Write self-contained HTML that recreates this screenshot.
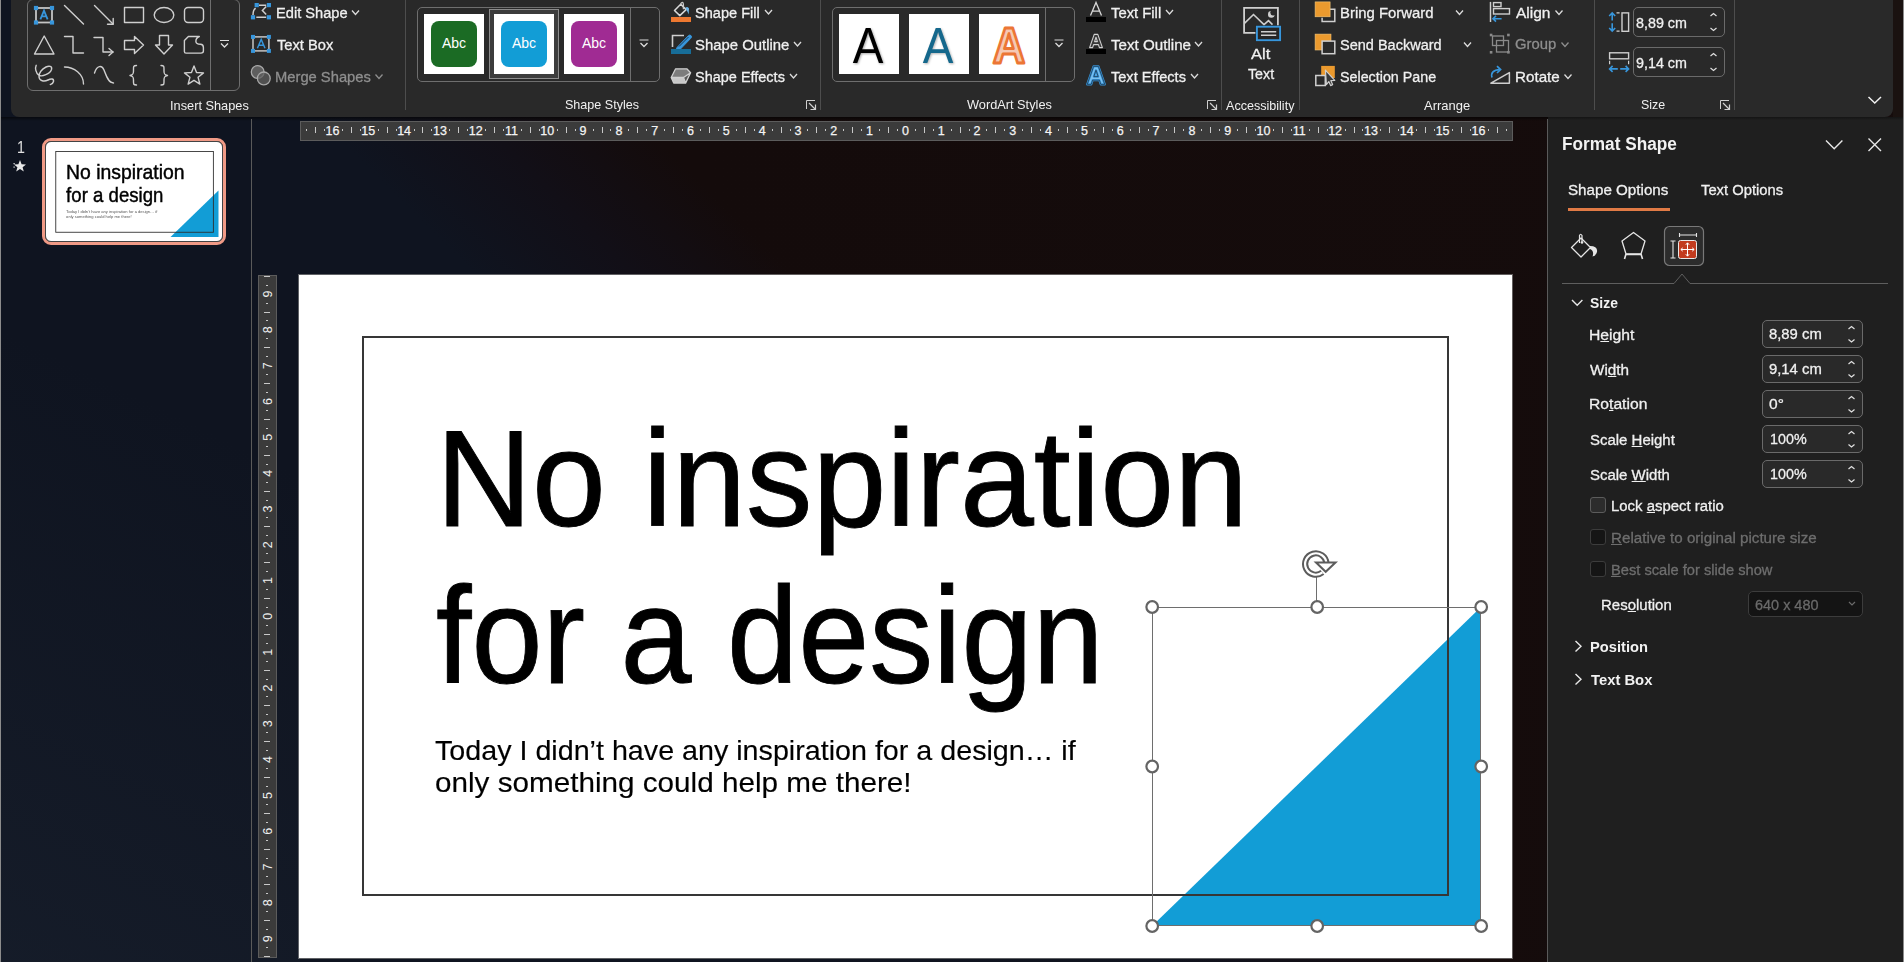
<!DOCTYPE html>
<html><head><meta charset="utf-8"><title>Format Shape</title><style>
*{box-sizing:border-box}
html,body{margin:0;padding:0}
body{width:1904px;height:962px;overflow:hidden;position:relative;background:#0e121c;font-family:"Liberation Sans", sans-serif}
.a{position:absolute}
.t{position:absolute;white-space:pre;font-family:"Liberation Sans", sans-serif}
.ui{-webkit-text-stroke:0.3px currentColor}
svg{position:absolute;overflow:visible}
</style></head>
<body>
<svg style="left:0;top:0" width="1904" height="962" viewBox="0 0 1904 962">
<defs>
<linearGradient id="bgg" gradientUnits="userSpaceOnUse" x1="400" y1="200" x2="560" y2="40">
<stop offset="0" stop-color="#0f1420"/><stop offset="0.5" stop-color="#120f17"/><stop offset="1" stop-color="#140b0b"/>
</linearGradient>
<linearGradient id="bgl" gradientUnits="userSpaceOnUse" x1="250" y1="450" x2="0" y2="962">
<stop offset="0" stop-color="#1a2230" stop-opacity="0"/><stop offset="1" stop-color="#1a2230" stop-opacity="0.55"/>
</linearGradient>
<linearGradient id="bgr" gradientUnits="userSpaceOnUse" x1="700" y1="0" x2="1548" y2="0">
<stop offset="0" stop-color="#1a1010" stop-opacity="0"/><stop offset="1" stop-color="#1a1010" stop-opacity="0.15"/>
</linearGradient>
</defs>
<rect x="0" y="0" width="1904" height="962" fill="url(#bgg)"/>
<rect x="0" y="0" width="1904" height="962" fill="url(#bgr)"/>
<rect x="0" y="0" width="300" height="962" fill="url(#bgl)"/>
</svg>
<div class="a" style="left:1893px;top:0px;width:10px;height:117px;background:#1a1210"></div>
<div class="a" style="left:0px;top:0px;width:1px;height:962px;background:#8c8c8c"></div>
<div class="a" style="left:1903px;top:0px;width:1px;height:962px;background:#8c8c8c"></div>
<div class="a" style="left:1px;top:117px;width:1547px;height:4px;background:linear-gradient(rgba(0,0,0,.55),rgba(0,0,0,0))"></div>
<div class="a" style="left:251px;top:119px;width:1px;height:843px;background:#5a5a5a"></div>
<div class="a" style="left:11px;top:-10px;width:1882px;height:127px;background:#292929;border-radius:8px"></div>
<div class="a" style="left:27px;top:-1px;width:213px;height:92px;border:1px solid #6e6e6e;border-radius:6px"></div>
<div class="a" style="left:210px;top:-1px;width:1px;height:92px;background:#6e6e6e"></div>
<svg style="left:0px;top:0px;" width="1" height="1" viewBox="0 0 1 1"><line x1="220.0" y1="40.5" x2="229.0" y2="40.5" stroke="#dcdcdc" stroke-width="1"/><polyline points="221.0,43.5 224.5,47 228.0,43.5" fill="none" stroke="#dcdcdc" stroke-width="1.3"/></svg>
<svg style="left:0px;top:0px;" width="1" height="1" viewBox="0 0 1 1"><rect x="36" y="8" width="16" height="14.5" fill="none" stroke="#c4c4c4" stroke-width="1.8"/><rect x="33.9" y="5.9" width="4.2" height="4.2" fill="#3796dc"/><rect x="49.9" y="5.9" width="4.2" height="4.2" fill="#3796dc"/><rect x="33.9" y="20.4" width="4.2" height="4.2" fill="#3796dc"/><rect x="49.9" y="20.4" width="4.2" height="4.2" fill="#3796dc"/><path d="M40.4,19.3 L44,10.6 L47.6,19.3 M41.6,16.3 H46.4" fill="none" stroke="#3796dc" stroke-width="1.8"/><line x1="64.5" y1="5.5" x2="83.5" y2="24" fill="none" stroke="#cfcfcf" stroke-width="1.4" stroke-linejoin="round" stroke-linecap="round"/><line x1="94.5" y1="5.5" x2="113" y2="24" fill="none" stroke="#cfcfcf" stroke-width="1.4" stroke-linejoin="round" stroke-linecap="round"/><polyline points="107.5,24.2 113.2,24.2 113.2,18.5" fill="none" stroke="#cfcfcf" stroke-width="1.4" stroke-linejoin="round" stroke-linecap="round"/><rect x="124.5" y="7.5" width="19" height="15" fill="none" stroke="#cfcfcf" stroke-width="1.4" stroke-linejoin="round" stroke-linecap="round"/><ellipse cx="164" cy="15" rx="9.8" ry="7.5" fill="none" stroke="#cfcfcf" stroke-width="1.4" stroke-linejoin="round" stroke-linecap="round"/><rect x="184.5" y="7.5" width="19" height="15" rx="3.5" fill="none" stroke="#cfcfcf" stroke-width="1.4" stroke-linejoin="round" stroke-linecap="round"/><polygon points="44.2,36 54,54 34.5,54" fill="none" stroke="#cfcfcf" stroke-width="1.4" stroke-linejoin="round" stroke-linecap="round"/><polyline points="64.5,36.5 73,36.5 73,53 83.5,53" fill="none" stroke="#cfcfcf" stroke-width="1.4" stroke-linejoin="round" stroke-linecap="round"/><polyline points="94,37.5 103,37.5 103,52 113,52" fill="none" stroke="#cfcfcf" stroke-width="1.4" stroke-linejoin="round" stroke-linecap="round"/><polyline points="109,48.5 113,52 109,55.5" fill="none" stroke="#cfcfcf" stroke-width="1.4" stroke-linejoin="round" stroke-linecap="round"/><polygon points="124.5,40.5 134.5,40.5 134.5,36.5 143.5,45 134.5,53.5 134.5,49.5 124.5,49.5" fill="none" stroke="#cfcfcf" stroke-width="1.4" stroke-linejoin="round" stroke-linecap="round"/><polygon points="159.5,35.5 168.5,35.5 168.5,45 172.5,45 164,54 155.5,45 159.5,45" fill="none" stroke="#cfcfcf" stroke-width="1.4" stroke-linejoin="round" stroke-linecap="round"/><path d="M188.4,36.5 H199.3 C196.5,37.5 195.8,39.5 195.9,41.5 C196,43.5 197.5,44.3 200.5,44.3 C202.5,44.3 203.4,45.5 203.4,47.5 V51 C203.4,52.5 202.5,53.1 201,53.1 H186 C185,53.1 184.4,52.5 184.4,51.5 V40.6 Z" fill="none" stroke="#cfcfcf" stroke-width="1.4" stroke-linejoin="round" stroke-linecap="round"/><path d="M36.2,65.3 C35,68 35.5,73 39,75.3 C42,77 50,74 51.5,69.5 C52.5,66 49,65.5 46,67 C42,69 38.5,73 39,77 C39.5,81 44,82 48,80 C51,78.5 54,78.5 53.5,81.5 C53.2,83 51.5,84.2 50.3,84.6" fill="none" stroke="#cfcfcf" stroke-width="1.4" stroke-linejoin="round" stroke-linecap="round"/><path d="M64.5,67 C74,67 83.5,74 83.5,84" fill="none" stroke="#cfcfcf" stroke-width="1.4" stroke-linejoin="round" stroke-linecap="round"/><path d="M94.5,73 C97,65 102,65 104,70 C106,75 108,83 113.5,83" fill="none" stroke="#cfcfcf" stroke-width="1.4" stroke-linejoin="round" stroke-linecap="round"/><path d="M136.5,65.5 C133,65.5 133.5,67 133.5,71 C133.5,74 133,75 130,75.5 C133,76 133.5,77 133.5,80 C133.5,84 133,85 136.5,85" fill="none" stroke="#cfcfcf" stroke-width="1.4" stroke-linejoin="round" stroke-linecap="round"/><path d="M161,65.5 C164.5,65.5 164,67 164,71 C164,74 164.5,75 167.5,75.5 C164.5,76 164,77 164,80 C164,84 164.5,85 161,85" fill="none" stroke="#cfcfcf" stroke-width="1.4" stroke-linejoin="round" stroke-linecap="round"/><polygon points="194.00,66.00 196.53,72.52 203.51,72.91 198.09,77.33 199.88,84.09 194.00,80.30 188.12,84.09 189.91,77.33 184.49,72.91 191.47,72.52" fill="none" stroke="#cfcfcf" stroke-width="1.4" stroke-linejoin="round" stroke-linecap="round"/></svg>
<svg style="left:0px;top:0px;" width="1" height="1" viewBox="0 0 1 1"><path d="M259,5.2 H266.2 M256.3,17.3 H266.2 M253,15 C253,11.5 253.8,9.5 255.6,8.2 M266.2,6.5 L262.4,10.4 L266.2,14.4" fill="none" stroke="#cfcfcf" stroke-width="1.5"/><rect x="254.6" y="2.9999999999999996" width="4.2" height="4.2" fill="#3796dc"/><rect x="266.79999999999995" y="2.9999999999999996" width="4.2" height="4.2" fill="#3796dc"/><rect x="250.9" y="15.200000000000001" width="4.2" height="4.2" fill="#3796dc"/><rect x="266.79999999999995" y="15.200000000000001" width="4.2" height="4.2" fill="#3796dc"/><rect x="253" y="36.9" width="15.9" height="14" fill="none" stroke="#cfcfcf" stroke-width="1.4"/><rect x="251" y="34.9" width="4" height="4" fill="#3796dc"/><rect x="266.9" y="34.9" width="4" height="4" fill="#3796dc"/><rect x="251" y="48.9" width="4" height="4" fill="#3796dc"/><rect x="266.9" y="48.9" width="4" height="4" fill="#3796dc"/><path d="M257.4,48.3 L261.2,39.4 L265,48.3 M258.7,45.2 H263.7" fill="none" stroke="#3796dc" stroke-width="1.4"/><circle cx="257.7" cy="72" r="6.4" fill="#5e5e5e" stroke="#a8a8a8" stroke-width="1.3"/><circle cx="263.8" cy="78.4" r="6.4" fill="#5e5e5e" fill-opacity=".75" stroke="#a8a8a8" stroke-width="1.3"/></svg>
<div class="t ui" style="left:275.6px;top:5.1px;font-size:15.5px;line-height:15.5px;color:#f0f0f0;transform:scaleX(0.9446);transform-origin:0 0;">Edit Shape</div>
<div class="t ui" style="left:276.6px;top:36.8px;font-size:15.5px;line-height:15.5px;color:#f0f0f0;transform:scaleX(0.9482);transform-origin:0 0;">Text Box</div>
<div class="t ui" style="left:275.0px;top:68.5px;font-size:15.5px;line-height:15.5px;color:#8e8e8e;transform:scaleX(0.9509);transform-origin:0 0;">Merge Shapes</div>
<div class="t" style="left:170.4px;top:99.0px;font-size:13px;line-height:13px;color:#f0f0f0;transform:scaleX(0.9823);transform-origin:0 0;">Insert Shapes</div>
<svg style="left:0px;top:0px;" width="1" height="1" viewBox="0 0 1 1"><polyline points="352,10.5 355.5,14.5 359,10.5" fill="none" stroke="#dcdcdc" stroke-width="1.3"/></svg>
<svg style="left:0px;top:0px;" width="1" height="1" viewBox="0 0 1 1"><polyline points="375.5,74.5 379.0,78.5 382.5,74.5" fill="none" stroke="#8e8e8e" stroke-width="1.3"/></svg>
<div class="a" style="left:405px;top:0px;width:1px;height:110px;background:#4d4d4d"></div>
<div class="a" style="left:417px;top:7px;width:243px;height:75px;border:1px solid #6e6e6e;border-radius:5px"></div>
<div class="a" style="left:630px;top:7px;width:1px;height:75px;background:#6e6e6e"></div>
<svg style="left:0px;top:0px;" width="1" height="1" viewBox="0 0 1 1"><line x1="639.5" y1="40.0" x2="648.5" y2="40.0" stroke="#dcdcdc" stroke-width="1"/><polyline points="640.5,43.0 644,46.5 647.5,43.0" fill="none" stroke="#dcdcdc" stroke-width="1.3"/></svg>
<div class="a" style="left:489px;top:9px;width:70px;height:70px;border:1px solid #8c8c8c;background:#3c3c3c"></div>
<div class="a" style="left:424px;top:14px;width:60px;height:60px;background:#fff"></div>
<div class="a" style="left:431px;top:21px;width:46px;height:46px;background:#1b6b24;border-radius:8px"></div>
<div class="t" style="left:424px;top:35px;width:60px;text-align:center;font-size:14px;line-height:16px;color:#fff">Abc</div>
<div class="a" style="left:494px;top:14px;width:60px;height:60px;background:#fff"></div>
<div class="a" style="left:501px;top:21px;width:46px;height:46px;background:#129dd6;border-radius:8px"></div>
<div class="t" style="left:494px;top:35px;width:60px;text-align:center;font-size:14px;line-height:16px;color:#fff">Abc</div>
<div class="a" style="left:564px;top:14px;width:60px;height:60px;background:#fff"></div>
<div class="a" style="left:571px;top:21px;width:46px;height:46px;background:#a02b93;border-radius:8px"></div>
<div class="t" style="left:564px;top:35px;width:60px;text-align:center;font-size:14px;line-height:16px;color:#fff">Abc</div>
<svg style="left:0px;top:0px;" width="1" height="1" viewBox="0 0 1 1"><path d="M674.5,10.5 L680.7,4.3 L686.1,9.6 L679.8,15.6 Z" fill="none" stroke="#d8d8d8" stroke-width="1.5" stroke-linejoin="round"/><path d="M680.5,4.6 Q681.2,2.2 682.4,2.4 Q683.4,2.6 683.4,4.6 V9.3" fill="none" stroke="#c8c8c8" stroke-width="1.3"/><path d="M685.4,7.6 Q687.9,5.8 689,8.6 L688.7,14.6 Q687.6,11.6 686.6,10.3 Z" fill="#6cb6ea"/><rect x="671" y="17" width="20" height="5" fill="#ed7830"/><path d="M684,35.5 H672.5 V47" fill="none" stroke="#cfcfcf" stroke-width="1.6"/><path d="M677,47.5 L688.3,35.8 Q689.8,34.4 691,35.6 Q692.2,36.9 690.8,38.3 L679.5,50 L676,50.8 Z" fill="#3796dc" stroke="#3796dc" stroke-width="1" stroke-linejoin="round"/><path d="M679,46.5 L688.5,37" stroke="#1e3a52" stroke-width="1"/><rect x="671" y="49" width="20" height="5" fill="#176d98"/><path d="M675.6,68.8 H686.8 L690.6,72.8 L685.6,83.1 H673.7 L671.2,77.5 Z" fill="#7c7c7c"/><path d="M671.2,77.5 H683.5 L685.6,83.1 H673.7 Z" fill="#c8c8c8"/><path d="M683.5,77.5 L690.6,72.8 L685.6,83.1 Z" fill="#5a5a5a"/><path d="M675.6,68.8 H686.8 L690.6,72.8 L685.6,83.1 H673.7 L671.2,77.5 Z M671.2,77.5 H683.5 L690.6,72.8 M683.5,77.5 L685.6,83.1" fill="none" stroke="#cfcfcf" stroke-width="1.3" stroke-linejoin="round"/></svg>
<div class="t ui" style="left:694.8px;top:4.9px;font-size:15.5px;line-height:15.5px;color:#f0f0f0;transform:scaleX(0.9397);transform-origin:0 0;">Shape Fill</div>
<div class="t ui" style="left:695.0px;top:36.9px;font-size:15.5px;line-height:15.5px;color:#f0f0f0;transform:scaleX(0.9600);transform-origin:0 0;">Shape Outline</div>
<div class="t ui" style="left:695.0px;top:68.6px;font-size:15.5px;line-height:15.5px;color:#f0f0f0;transform:scaleX(0.9339);transform-origin:0 0;">Shape Effects</div>
<div class="t" style="left:565.0px;top:97.8px;font-size:13px;line-height:13px;color:#f0f0f0;transform:scaleX(0.9656);transform-origin:0 0;">Shape Styles</div>
<svg style="left:0px;top:0px;" width="1" height="1" viewBox="0 0 1 1"><polyline points="765,10 768.5,14 772,10" fill="none" stroke="#dcdcdc" stroke-width="1.3"/></svg>
<svg style="left:0px;top:0px;" width="1" height="1" viewBox="0 0 1 1"><polyline points="794,42 797.5,46 801,42" fill="none" stroke="#dcdcdc" stroke-width="1.3"/></svg>
<svg style="left:0px;top:0px;" width="1" height="1" viewBox="0 0 1 1"><polyline points="790,74 793.5,78 797,74" fill="none" stroke="#dcdcdc" stroke-width="1.3"/></svg>
<svg style="left:0px;top:0px;" width="1" height="1" viewBox="0 0 1 1"><path d="M806.5,109 V100.5 H815" fill="none" stroke="#d0d0d0" stroke-width="1"/><path d="M809,103 L815.5,109.5 M815.5,104.5 V109.5 H810.5" fill="none" stroke="#d0d0d0" stroke-width="1.2"/></svg>
<div class="a" style="left:820px;top:0px;width:1px;height:110px;background:#4d4d4d"></div>
<div class="a" style="left:832px;top:7px;width:243px;height:75px;border:1px solid #6e6e6e;border-radius:5px"></div>
<div class="a" style="left:1045px;top:7px;width:1px;height:75px;background:#6e6e6e"></div>
<svg style="left:0px;top:0px;" width="1" height="1" viewBox="0 0 1 1"><line x1="1054.5" y1="40.0" x2="1063.5" y2="40.0" stroke="#dcdcdc" stroke-width="1"/><polyline points="1055.5,43.0 1059,46.5 1062.5,43.0" fill="none" stroke="#dcdcdc" stroke-width="1.3"/></svg>
<div class="a" style="left:839px;top:14px;width:60px;height:60px;background:#fff"></div>
<div class="a" style="left:909px;top:14px;width:60px;height:60px;background:#fff"></div>
<div class="a" style="left:979px;top:14px;width:60px;height:60px;background:#fff"></div>
<svg style="left:0px;top:0px;" width="1" height="1" viewBox="0 0 1 1"><text x="0" y="0" font-size="50" text-anchor="middle" fill="#000" font-family='"Liberation Sans", sans-serif' transform="translate(868,63) scale(0.92,1)" style="filter:drop-shadow(1px 1px 1px rgba(0,0,0,.35))">A</text><text x="0" y="0" font-size="50" text-anchor="middle" fill="#15688c" font-family='"Liberation Sans", sans-serif' transform="translate(938,63) scale(0.92,1)" style="filter:drop-shadow(1px 1px 1px rgba(0,0,0,.3))">A</text><text x="0" y="0" font-size="50" text-anchor="middle" fill="#f6c9b3" stroke="#ec7635" stroke-width="3" stroke-linejoin="round" font-family='"Liberation Sans", sans-serif' font-weight="700" transform="translate(1009,63) scale(0.9,1)">A</text></svg>
<svg style="left:0px;top:0px;" width="1" height="1" viewBox="0 0 1 1"><path d="M1090.5,15.5 L1096,2.5 L1101.5,15.5 M1092.4,11.2 H1099.6" fill="none" stroke="#d8d8d8" stroke-width="1.3"/><rect x="1086" y="17" width="20" height="5" fill="#000"/><path d="M1089.6,47.6 L1094.2,34.4 H1097.8 L1102.4,47.6 H1099.4 L1098.4,44.6 H1093.6 L1092.6,47.6 Z M1094.6,41.6 L1096,37.2 L1097.4,41.6 Z" fill="#3a3a3a" stroke="#d0d0d0" stroke-width="1.1" stroke-linejoin="round"/><rect x="1086" y="49" width="20" height="5" fill="#000"/><path d="M1087.2,84.4 L1093.6,66.4 H1098.4 L1104.8,84.4 H1100.8 L1099.4,80.2 H1092.6 L1091.2,84.4 Z M1093.8,76.6 L1096,70.2 L1098.2,76.6 Z" fill="#7cc0ee" stroke="#3796dc" stroke-width="2.2" stroke-linejoin="round"/><path d="M1087.2,84.4 L1093.6,66.4 H1098.4 L1104.8,84.4 H1100.8 L1099.4,80.2 H1092.6 L1091.2,84.4 Z M1093.8,76.6 L1096,70.2 L1098.2,76.6 Z" fill="none" stroke="#1d2f40" stroke-width="0.7" stroke-linejoin="round"/></svg>
<div class="t ui" style="left:1110.8px;top:4.9px;font-size:15.5px;line-height:15.5px;color:#f0f0f0;transform:scaleX(0.9556);transform-origin:0 0;">Text Fill</div>
<div class="t ui" style="left:1111.0px;top:36.9px;font-size:15.5px;line-height:15.5px;color:#f0f0f0;transform:scaleX(0.9776);transform-origin:0 0;">Text Outline</div>
<div class="t ui" style="left:1111.0px;top:68.6px;font-size:15.5px;line-height:15.5px;color:#f0f0f0;transform:scaleX(0.9383);transform-origin:0 0;">Text Effects</div>
<div class="t" style="left:967.3px;top:97.6px;font-size:13px;line-height:13px;color:#f0f0f0;transform:scaleX(0.9816);transform-origin:0 0;">WordArt Styles</div>
<svg style="left:0px;top:0px;" width="1" height="1" viewBox="0 0 1 1"><polyline points="1166,10 1169.5,14 1173,10" fill="none" stroke="#dcdcdc" stroke-width="1.3"/></svg>
<svg style="left:0px;top:0px;" width="1" height="1" viewBox="0 0 1 1"><polyline points="1195,42 1198.5,46 1202,42" fill="none" stroke="#dcdcdc" stroke-width="1.3"/></svg>
<svg style="left:0px;top:0px;" width="1" height="1" viewBox="0 0 1 1"><polyline points="1191,74 1194.5,78 1198,74" fill="none" stroke="#dcdcdc" stroke-width="1.3"/></svg>
<svg style="left:0px;top:0px;" width="1" height="1" viewBox="0 0 1 1"><path d="M1207.5,109 V100.5 H1216" fill="none" stroke="#d0d0d0" stroke-width="1"/><path d="M1210,103 L1216.5,109.5 M1216.5,104.5 V109.5 H1211.5" fill="none" stroke="#d0d0d0" stroke-width="1.2"/></svg>
<div class="a" style="left:1221px;top:0px;width:1px;height:110px;background:#4d4d4d"></div>
<svg style="left:0px;top:0px;" width="1" height="1" viewBox="0 0 1 1"><path d="M1255.5,32.8 H1244.1 V7.9 H1277.9 V25.5" fill="none" stroke="#cfcfcf" stroke-width="1.8"/><polyline points="1244.4,23.4 1253.5,14.5 1264,24.6 1268.5,20.6 1272.5,24.6" fill="none" stroke="#cfcfcf" stroke-width="1.6"/><circle cx="1271.3" cy="14.4" r="3.3" fill="#cfcfcf"/><circle cx="1273.2" cy="12.5" r="2.9" fill="#292929"/><rect x="1255.9" y="25.7" width="25.2" height="15.5" fill="#1c1c1c"/><rect x="1256.9" y="26.7" width="23.2" height="13.5" fill="#262626" stroke="#3796dc" stroke-width="1.9"/><path d="M1261,31.8 H1276.2 M1261,35.3 H1276.2" stroke="#cfcfcf" stroke-width="1.5"/></svg>
<div class="t ui" style="left:1251.0px;top:45.5px;font-size:15.5px;line-height:15.5px;color:#f0f0f0;transform:scaleX(1.0647);transform-origin:0 0;">Alt</div>
<div class="t ui" style="left:1248.2px;top:65.5px;font-size:15.5px;line-height:15.5px;color:#f0f0f0;transform:scaleX(0.9179);transform-origin:0 0;">Text</div>
<div class="t" style="left:1225.7px;top:98.8px;font-size:13px;line-height:13px;color:#f0f0f0;transform:scaleX(0.9666);transform-origin:0 0;">Accessibility</div>
<div class="a" style="left:1299px;top:0px;width:1px;height:110px;background:#4d4d4d"></div>
<svg style="left:0px;top:0px;" width="1" height="1" viewBox="0 0 1 1"><path d="M1330.1,9.3 H1334.8 V21.5 H1322.1 V17.8" fill="none" stroke="#cfcfcf" stroke-width="1.5"/><rect x="1315.1" y="1.9" width="15" height="14.9" fill="#eb9a2e" stroke="#f5c77a" stroke-width=".6"/><rect x="1315.1" y="34.1" width="15.9" height="15.9" fill="#eb9a2e" stroke="#f5c77a" stroke-width=".6"/><rect x="1322.1" y="41.1" width="12.7" height="12.6" fill="#2a2a2a" stroke="#cfcfcf" stroke-width="1.5"/><rect x="1321.2" y="65.9" width="13.6" height="12.1" fill="#eb9a2e"/><rect x="1315.8" y="75.5" width="9.5" height="10" fill="#2a2a2a" stroke="#cfcfcf" stroke-width="1.5"/><path d="M1325.4,70.1 L1334.8,80.4 L1330.8,80.6 L1332.6,84.6 L1330.6,85.6 L1328.8,81.6 L1326.4,84.6 Z" fill="#3a3a3a" stroke="#cfcfcf" stroke-width="1.2" stroke-linejoin="round"/><path d="M1490.5,1.9 V22" stroke="#cfcfcf" stroke-width="1.5"/><rect x="1493.5" y="2.6" width="7.5" height="4" fill="none" stroke="#cfcfcf" stroke-width="1.4"/><rect x="1493.5" y="8.6" width="16" height="5.4" fill="none" stroke="#cfcfcf" stroke-width="1.4"/><path d="M1501.6,18.7 H1493 M1496,15.8 L1493,18.7 L1496,21.6" fill="none" stroke="#3796dc" stroke-width="1.6"/><rect x="1492.5" y="36" width="11" height="9.5" fill="none" stroke="#8a8a8a" stroke-width="1.3"/><rect x="1496.5" y="40.5" width="12" height="11.5" fill="none" stroke="#8a8a8a" stroke-width="1.3"/><rect x="1489.8" y="33.7" width="2.6" height="2.6" fill="#8a8a8a"/><rect x="1507.1000000000001" y="33.7" width="2.6" height="2.6" fill="#8a8a8a"/><rect x="1489.8" y="51.0" width="2.6" height="2.6" fill="#8a8a8a"/><rect x="1507.1000000000001" y="51.0" width="2.6" height="2.6" fill="#8a8a8a"/><polygon points="1490.9,83.2 1509.4,72.6 1509.4,83.2" fill="none" stroke="#cfcfcf" stroke-width="1.5" stroke-linejoin="round"/><path d="M1492,77.5 Q1490,70 1500,69.6" fill="none" stroke="#3796dc" stroke-width="1.7"/><polyline points="1497,66.2 1500.6,69.6 1497,73" fill="none" stroke="#3796dc" stroke-width="1.7"/></svg>
<div class="t ui" style="left:1339.5px;top:4.9px;font-size:15.5px;line-height:15.5px;color:#f0f0f0;transform:scaleX(0.9601);transform-origin:0 0;">Bring Forward</div>
<div class="t ui" style="left:1339.5px;top:36.9px;font-size:15.5px;line-height:15.5px;color:#f0f0f0;transform:scaleX(0.9359);transform-origin:0 0;">Send Backward</div>
<div class="t ui" style="left:1339.5px;top:68.6px;font-size:15.5px;line-height:15.5px;color:#f0f0f0;transform:scaleX(0.9224);transform-origin:0 0;">Selection Pane</div>
<div class="t ui" style="left:1515.5px;top:4.7px;font-size:15.5px;line-height:15.5px;color:#f0f0f0;transform:scaleX(0.9992);transform-origin:0 0;">Align</div>
<div class="t ui" style="left:1514.5px;top:35.9px;font-size:15.5px;line-height:15.5px;color:#8e8e8e;transform:scaleX(0.9567);transform-origin:0 0;">Group</div>
<div class="t ui" style="left:1514.5px;top:68.9px;font-size:15.5px;line-height:15.5px;color:#f0f0f0;transform:scaleX(0.9809);transform-origin:0 0;">Rotate</div>
<div class="t" style="left:1423.5px;top:98.8px;font-size:13px;line-height:13px;color:#f0f0f0;transform:scaleX(0.9966);transform-origin:0 0;">Arrange</div>
<svg style="left:0px;top:0px;" width="1" height="1" viewBox="0 0 1 1"><polyline points="1456,10.5 1459.5,14.5 1463,10.5" fill="none" stroke="#dcdcdc" stroke-width="1.3"/></svg>
<svg style="left:0px;top:0px;" width="1" height="1" viewBox="0 0 1 1"><polyline points="1464,42.5 1467.5,46.5 1471,42.5" fill="none" stroke="#dcdcdc" stroke-width="1.3"/></svg>
<svg style="left:0px;top:0px;" width="1" height="1" viewBox="0 0 1 1"><polyline points="1555.5,10.5 1559.0,14.5 1562.5,10.5" fill="none" stroke="#dcdcdc" stroke-width="1.3"/></svg>
<svg style="left:0px;top:0px;" width="1" height="1" viewBox="0 0 1 1"><polyline points="1561.5,42.5 1565.0,46.5 1568.5,42.5" fill="none" stroke="#8e8e8e" stroke-width="1.3"/></svg>
<svg style="left:0px;top:0px;" width="1" height="1" viewBox="0 0 1 1"><polyline points="1564.5,74.5 1568.0,78.5 1571.5,74.5" fill="none" stroke="#dcdcdc" stroke-width="1.3"/></svg>
<div class="a" style="left:1594px;top:0px;width:1px;height:110px;background:#4d4d4d"></div>
<svg style="left:0px;top:0px;" width="1" height="1" viewBox="0 0 1 1"><path d="M1612.2,13 V20.4 M1612.2,23.2 V31 M1609.2,16 L1612.2,13 L1615.2,16 M1609.2,28 L1612.2,31 L1615.2,28" fill="none" stroke="#3796dc" stroke-width="1.6"/><rect x="1622" y="12.9" width="6.6" height="18.4" fill="none" stroke="#cfcfcf" stroke-width="1.4"/><path d="M1616.5,12.9 H1619.6 M1616.5,31.1 H1619.6" stroke="#cfcfcf" stroke-width="1.2"/><rect x="1609.6" y="52.8" width="19" height="6" fill="none" stroke="#cfcfcf" stroke-width="1.4"/><path d="M1609.6,60.7 V64.2 M1628.6,60.7 V64.2" stroke="#cfcfcf" stroke-width="1.2"/><path d="M1609.6,68.9 H1617.8 M1620.2,68.9 H1628.6 M1612.6,65.9 L1609.6,68.9 L1612.6,71.9 M1625.6,65.9 L1628.6,68.9 L1625.6,71.9" fill="none" stroke="#3796dc" stroke-width="1.6"/></svg>
<div class="a" style="left:1633px;top:7px;width:92px;height:30px;border:1px solid #6a6a6a;border-radius:5px"></div>
<div class="a" style="left:1633px;top:47px;width:92px;height:30px;border:1px solid #6a6a6a;border-radius:5px"></div>
<svg style="left:0px;top:0px;" width="1" height="1" viewBox="0 0 1 1"><polyline points="1710.5,16 1713.5,13.5 1716.5,16" fill="none" stroke="#e0e0e0" stroke-width="1.2"/><polyline points="1710.5,28 1713.5,30.5 1716.5,28" fill="none" stroke="#e0e0e0" stroke-width="1.2"/></svg>
<svg style="left:0px;top:0px;" width="1" height="1" viewBox="0 0 1 1"><polyline points="1710.5,56 1713.5,53.5 1716.5,56" fill="none" stroke="#e0e0e0" stroke-width="1.2"/><polyline points="1710.5,68 1713.5,70.5 1716.5,68" fill="none" stroke="#e0e0e0" stroke-width="1.2"/></svg>
<div class="t ui" style="left:1635.6px;top:14.9px;font-size:15.5px;line-height:15.5px;color:#f0f0f0;transform:scaleX(0.9231);transform-origin:0 0;">8,89 cm</div>
<div class="t ui" style="left:1635.6px;top:54.5px;font-size:15.5px;line-height:15.5px;color:#f0f0f0;transform:scaleX(0.9231);transform-origin:0 0;">9,14 cm</div>
<div class="t" style="left:1641.2px;top:97.6px;font-size:13px;line-height:13px;color:#f0f0f0;transform:scaleX(0.9539);transform-origin:0 0;">Size</div>
<svg style="left:0px;top:0px;" width="1" height="1" viewBox="0 0 1 1"><path d="M1720.5,109 V100.5 H1729" fill="none" stroke="#d0d0d0" stroke-width="1"/><path d="M1723,103 L1729.5,109.5 M1729.5,104.5 V109.5 H1724.5" fill="none" stroke="#d0d0d0" stroke-width="1.2"/></svg>
<div class="a" style="left:1734px;top:0px;width:1px;height:110px;background:#4d4d4d"></div>
<svg style="left:0px;top:0px;" width="1" height="1" viewBox="0 0 1 1"><polyline points="1868.5,97 1874.75,103 1881.0,97" fill="none" stroke="#f0f0f0" stroke-width="1.5"/></svg>
<div class="a" style="left:300px;top:121px;width:1213px;height:20px;background:#3b3b3b;border:1px solid #5c5c5c"></div>
<svg style="left:0;top:0" width="1904" height="962" viewBox="0 0 1904 962" font-family='"Liberation Sans", sans-serif'><rect x="306" y="129" width="1" height="2" fill="#c8c8c8"/><rect x="315" y="127" width="1" height="6" fill="#c8c8c8"/><rect x="324" y="129" width="1" height="2" fill="#c8c8c8"/><text x="332.4" y="135" font-size="12.5" text-anchor="middle" fill="#f4f4f4" stroke="#f4f4f4" stroke-width="0.25">16</text><rect x="342" y="129" width="1" height="2" fill="#c8c8c8"/><rect x="351" y="127" width="1" height="6" fill="#c8c8c8"/><rect x="360" y="129" width="1" height="2" fill="#c8c8c8"/><text x="368.2" y="135" font-size="12.5" text-anchor="middle" fill="#f4f4f4" stroke="#f4f4f4" stroke-width="0.25">15</text><rect x="378" y="129" width="1" height="2" fill="#c8c8c8"/><rect x="387" y="127" width="1" height="6" fill="#c8c8c8"/><rect x="396" y="129" width="1" height="2" fill="#c8c8c8"/><text x="404.1" y="135" font-size="12.5" text-anchor="middle" fill="#f4f4f4" stroke="#f4f4f4" stroke-width="0.25">14</text><rect x="414" y="129" width="1" height="2" fill="#c8c8c8"/><rect x="422" y="127" width="1" height="6" fill="#c8c8c8"/><rect x="431" y="129" width="1" height="2" fill="#c8c8c8"/><text x="439.9" y="135" font-size="12.5" text-anchor="middle" fill="#f4f4f4" stroke="#f4f4f4" stroke-width="0.25">13</text><rect x="449" y="129" width="1" height="2" fill="#c8c8c8"/><rect x="458" y="127" width="1" height="6" fill="#c8c8c8"/><rect x="467" y="129" width="1" height="2" fill="#c8c8c8"/><text x="475.7" y="135" font-size="12.5" text-anchor="middle" fill="#f4f4f4" stroke="#f4f4f4" stroke-width="0.25">12</text><rect x="485" y="129" width="1" height="2" fill="#c8c8c8"/><rect x="494" y="127" width="1" height="6" fill="#c8c8c8"/><rect x="503" y="129" width="1" height="2" fill="#c8c8c8"/><text x="511.5" y="135" font-size="12.5" text-anchor="middle" fill="#f4f4f4" stroke="#f4f4f4" stroke-width="0.25">11</text><rect x="521" y="129" width="1" height="2" fill="#c8c8c8"/><rect x="530" y="127" width="1" height="6" fill="#c8c8c8"/><rect x="539" y="129" width="1" height="2" fill="#c8c8c8"/><text x="547.3" y="135" font-size="12.5" text-anchor="middle" fill="#f4f4f4" stroke="#f4f4f4" stroke-width="0.25">10</text><rect x="557" y="129" width="1" height="2" fill="#c8c8c8"/><rect x="566" y="127" width="1" height="6" fill="#c8c8c8"/><rect x="575" y="129" width="1" height="2" fill="#c8c8c8"/><text x="583.1" y="135" font-size="12.5" text-anchor="middle" fill="#f4f4f4" stroke="#f4f4f4" stroke-width="0.25">9</text><rect x="593" y="129" width="1" height="2" fill="#c8c8c8"/><rect x="602" y="127" width="1" height="6" fill="#c8c8c8"/><rect x="610" y="129" width="1" height="2" fill="#c8c8c8"/><text x="618.9" y="135" font-size="12.5" text-anchor="middle" fill="#f4f4f4" stroke="#f4f4f4" stroke-width="0.25">8</text><rect x="628" y="129" width="1" height="2" fill="#c8c8c8"/><rect x="637" y="127" width="1" height="6" fill="#c8c8c8"/><rect x="646" y="129" width="1" height="2" fill="#c8c8c8"/><text x="654.7" y="135" font-size="12.5" text-anchor="middle" fill="#f4f4f4" stroke="#f4f4f4" stroke-width="0.25">7</text><rect x="664" y="129" width="1" height="2" fill="#c8c8c8"/><rect x="673" y="127" width="1" height="6" fill="#c8c8c8"/><rect x="682" y="129" width="1" height="2" fill="#c8c8c8"/><text x="690.5" y="135" font-size="12.5" text-anchor="middle" fill="#f4f4f4" stroke="#f4f4f4" stroke-width="0.25">6</text><rect x="700" y="129" width="1" height="2" fill="#c8c8c8"/><rect x="709" y="127" width="1" height="6" fill="#c8c8c8"/><rect x="718" y="129" width="1" height="2" fill="#c8c8c8"/><text x="726.3" y="135" font-size="12.5" text-anchor="middle" fill="#f4f4f4" stroke="#f4f4f4" stroke-width="0.25">5</text><rect x="736" y="129" width="1" height="2" fill="#c8c8c8"/><rect x="745" y="127" width="1" height="6" fill="#c8c8c8"/><rect x="754" y="129" width="1" height="2" fill="#c8c8c8"/><text x="762.2" y="135" font-size="12.5" text-anchor="middle" fill="#f4f4f4" stroke="#f4f4f4" stroke-width="0.25">4</text><rect x="772" y="129" width="1" height="2" fill="#c8c8c8"/><rect x="781" y="127" width="1" height="6" fill="#c8c8c8"/><rect x="790" y="129" width="1" height="2" fill="#c8c8c8"/><text x="798.0" y="135" font-size="12.5" text-anchor="middle" fill="#f4f4f4" stroke="#f4f4f4" stroke-width="0.25">3</text><rect x="807" y="129" width="1" height="2" fill="#c8c8c8"/><rect x="816" y="127" width="1" height="6" fill="#c8c8c8"/><rect x="825" y="129" width="1" height="2" fill="#c8c8c8"/><text x="833.8" y="135" font-size="12.5" text-anchor="middle" fill="#f4f4f4" stroke="#f4f4f4" stroke-width="0.25">2</text><rect x="843" y="129" width="1" height="2" fill="#c8c8c8"/><rect x="852" y="127" width="1" height="6" fill="#c8c8c8"/><rect x="861" y="129" width="1" height="2" fill="#c8c8c8"/><text x="869.6" y="135" font-size="12.5" text-anchor="middle" fill="#f4f4f4" stroke="#f4f4f4" stroke-width="0.25">1</text><rect x="879" y="129" width="1" height="2" fill="#c8c8c8"/><rect x="888" y="127" width="1" height="6" fill="#c8c8c8"/><rect x="897" y="129" width="1" height="2" fill="#c8c8c8"/><text x="905.4" y="135" font-size="12.5" text-anchor="middle" fill="#f4f4f4" stroke="#f4f4f4" stroke-width="0.25">0</text><rect x="915" y="129" width="1" height="2" fill="#c8c8c8"/><rect x="924" y="127" width="1" height="6" fill="#c8c8c8"/><rect x="933" y="129" width="1" height="2" fill="#c8c8c8"/><text x="941.2" y="135" font-size="12.5" text-anchor="middle" fill="#f4f4f4" stroke="#f4f4f4" stroke-width="0.25">1</text><rect x="951" y="129" width="1" height="2" fill="#c8c8c8"/><rect x="960" y="127" width="1" height="6" fill="#c8c8c8"/><rect x="969" y="129" width="1" height="2" fill="#c8c8c8"/><text x="977.0" y="135" font-size="12.5" text-anchor="middle" fill="#f4f4f4" stroke="#f4f4f4" stroke-width="0.25">2</text><rect x="986" y="129" width="1" height="2" fill="#c8c8c8"/><rect x="995" y="127" width="1" height="6" fill="#c8c8c8"/><rect x="1004" y="129" width="1" height="2" fill="#c8c8c8"/><text x="1012.8" y="135" font-size="12.5" text-anchor="middle" fill="#f4f4f4" stroke="#f4f4f4" stroke-width="0.25">3</text><rect x="1022" y="129" width="1" height="2" fill="#c8c8c8"/><rect x="1031" y="127" width="1" height="6" fill="#c8c8c8"/><rect x="1040" y="129" width="1" height="2" fill="#c8c8c8"/><text x="1048.6" y="135" font-size="12.5" text-anchor="middle" fill="#f4f4f4" stroke="#f4f4f4" stroke-width="0.25">4</text><rect x="1058" y="129" width="1" height="2" fill="#c8c8c8"/><rect x="1067" y="127" width="1" height="6" fill="#c8c8c8"/><rect x="1076" y="129" width="1" height="2" fill="#c8c8c8"/><text x="1084.5" y="135" font-size="12.5" text-anchor="middle" fill="#f4f4f4" stroke="#f4f4f4" stroke-width="0.25">5</text><rect x="1094" y="129" width="1" height="2" fill="#c8c8c8"/><rect x="1103" y="127" width="1" height="6" fill="#c8c8c8"/><rect x="1112" y="129" width="1" height="2" fill="#c8c8c8"/><text x="1120.3" y="135" font-size="12.5" text-anchor="middle" fill="#f4f4f4" stroke="#f4f4f4" stroke-width="0.25">6</text><rect x="1130" y="129" width="1" height="2" fill="#c8c8c8"/><rect x="1139" y="127" width="1" height="6" fill="#c8c8c8"/><rect x="1148" y="129" width="1" height="2" fill="#c8c8c8"/><text x="1156.1" y="135" font-size="12.5" text-anchor="middle" fill="#f4f4f4" stroke="#f4f4f4" stroke-width="0.25">7</text><rect x="1166" y="129" width="1" height="2" fill="#c8c8c8"/><rect x="1174" y="127" width="1" height="6" fill="#c8c8c8"/><rect x="1183" y="129" width="1" height="2" fill="#c8c8c8"/><text x="1191.9" y="135" font-size="12.5" text-anchor="middle" fill="#f4f4f4" stroke="#f4f4f4" stroke-width="0.25">8</text><rect x="1201" y="129" width="1" height="2" fill="#c8c8c8"/><rect x="1210" y="127" width="1" height="6" fill="#c8c8c8"/><rect x="1219" y="129" width="1" height="2" fill="#c8c8c8"/><text x="1227.7" y="135" font-size="12.5" text-anchor="middle" fill="#f4f4f4" stroke="#f4f4f4" stroke-width="0.25">9</text><rect x="1237" y="129" width="1" height="2" fill="#c8c8c8"/><rect x="1246" y="127" width="1" height="6" fill="#c8c8c8"/><rect x="1255" y="129" width="1" height="2" fill="#c8c8c8"/><text x="1263.5" y="135" font-size="12.5" text-anchor="middle" fill="#f4f4f4" stroke="#f4f4f4" stroke-width="0.25">10</text><rect x="1273" y="129" width="1" height="2" fill="#c8c8c8"/><rect x="1282" y="127" width="1" height="6" fill="#c8c8c8"/><rect x="1291" y="129" width="1" height="2" fill="#c8c8c8"/><text x="1299.3" y="135" font-size="12.5" text-anchor="middle" fill="#f4f4f4" stroke="#f4f4f4" stroke-width="0.25">11</text><rect x="1309" y="129" width="1" height="2" fill="#c8c8c8"/><rect x="1318" y="127" width="1" height="6" fill="#c8c8c8"/><rect x="1327" y="129" width="1" height="2" fill="#c8c8c8"/><text x="1335.1" y="135" font-size="12.5" text-anchor="middle" fill="#f4f4f4" stroke="#f4f4f4" stroke-width="0.25">12</text><rect x="1345" y="129" width="1" height="2" fill="#c8c8c8"/><rect x="1354" y="127" width="1" height="6" fill="#c8c8c8"/><rect x="1362" y="129" width="1" height="2" fill="#c8c8c8"/><text x="1370.9" y="135" font-size="12.5" text-anchor="middle" fill="#f4f4f4" stroke="#f4f4f4" stroke-width="0.25">13</text><rect x="1380" y="129" width="1" height="2" fill="#c8c8c8"/><rect x="1389" y="127" width="1" height="6" fill="#c8c8c8"/><rect x="1398" y="129" width="1" height="2" fill="#c8c8c8"/><text x="1406.7" y="135" font-size="12.5" text-anchor="middle" fill="#f4f4f4" stroke="#f4f4f4" stroke-width="0.25">14</text><rect x="1416" y="129" width="1" height="2" fill="#c8c8c8"/><rect x="1425" y="127" width="1" height="6" fill="#c8c8c8"/><rect x="1434" y="129" width="1" height="2" fill="#c8c8c8"/><text x="1442.6" y="135" font-size="12.5" text-anchor="middle" fill="#f4f4f4" stroke="#f4f4f4" stroke-width="0.25">15</text><rect x="1452" y="129" width="1" height="2" fill="#c8c8c8"/><rect x="1461" y="127" width="1" height="6" fill="#c8c8c8"/><rect x="1470" y="129" width="1" height="2" fill="#c8c8c8"/><text x="1478.4" y="135" font-size="12.5" text-anchor="middle" fill="#f4f4f4" stroke="#f4f4f4" stroke-width="0.25">16</text><rect x="1488" y="129" width="1" height="2" fill="#c8c8c8"/><rect x="1497" y="127" width="1" height="6" fill="#c8c8c8"/><rect x="1506" y="129" width="1" height="2" fill="#c8c8c8"/></svg>
<div class="a" style="left:258px;top:275px;width:19px;height:683px;background:#3b3b3b;border:1px solid #5c5c5c"></div>
<svg style="left:0;top:0" width="1904" height="962" viewBox="0 0 1904 962" font-family='"Liberation Sans", sans-serif'><rect x="264" y="276" width="6" height="1" fill="#c8c8c8"/><rect x="266" y="285" width="2" height="1" fill="#c8c8c8"/><text x="0" y="0" font-size="12.5" text-anchor="middle" fill="#f0f0f0" transform="translate(272.2,294.1) rotate(-90)">9</text><rect x="266" y="303" width="2" height="1" fill="#c8c8c8"/><rect x="264" y="312" width="6" height="1" fill="#c8c8c8"/><rect x="266" y="320" width="2" height="1" fill="#c8c8c8"/><text x="0" y="0" font-size="12.5" text-anchor="middle" fill="#f0f0f0" transform="translate(272.2,329.9) rotate(-90)">8</text><rect x="266" y="338" width="2" height="1" fill="#c8c8c8"/><rect x="264" y="347" width="6" height="1" fill="#c8c8c8"/><rect x="266" y="356" width="2" height="1" fill="#c8c8c8"/><text x="0" y="0" font-size="12.5" text-anchor="middle" fill="#f0f0f0" transform="translate(272.2,365.7) rotate(-90)">7</text><rect x="266" y="374" width="2" height="1" fill="#c8c8c8"/><rect x="264" y="383" width="6" height="1" fill="#c8c8c8"/><rect x="266" y="392" width="2" height="1" fill="#c8c8c8"/><text x="0" y="0" font-size="12.5" text-anchor="middle" fill="#f0f0f0" transform="translate(272.2,401.5) rotate(-90)">6</text><rect x="266" y="410" width="2" height="1" fill="#c8c8c8"/><rect x="264" y="419" width="6" height="1" fill="#c8c8c8"/><rect x="266" y="428" width="2" height="1" fill="#c8c8c8"/><text x="0" y="0" font-size="12.5" text-anchor="middle" fill="#f0f0f0" transform="translate(272.2,437.3) rotate(-90)">5</text><rect x="266" y="446" width="2" height="1" fill="#c8c8c8"/><rect x="264" y="455" width="6" height="1" fill="#c8c8c8"/><rect x="266" y="464" width="2" height="1" fill="#c8c8c8"/><text x="0" y="0" font-size="12.5" text-anchor="middle" fill="#f0f0f0" transform="translate(272.2,473.2) rotate(-90)">4</text><rect x="266" y="482" width="2" height="1" fill="#c8c8c8"/><rect x="264" y="491" width="6" height="1" fill="#c8c8c8"/><rect x="266" y="500" width="2" height="1" fill="#c8c8c8"/><text x="0" y="0" font-size="12.5" text-anchor="middle" fill="#f0f0f0" transform="translate(272.2,509.0) rotate(-90)">3</text><rect x="266" y="517" width="2" height="1" fill="#c8c8c8"/><rect x="264" y="526" width="6" height="1" fill="#c8c8c8"/><rect x="266" y="535" width="2" height="1" fill="#c8c8c8"/><text x="0" y="0" font-size="12.5" text-anchor="middle" fill="#f0f0f0" transform="translate(272.2,544.8) rotate(-90)">2</text><rect x="266" y="553" width="2" height="1" fill="#c8c8c8"/><rect x="264" y="562" width="6" height="1" fill="#c8c8c8"/><rect x="266" y="571" width="2" height="1" fill="#c8c8c8"/><text x="0" y="0" font-size="12.5" text-anchor="middle" fill="#f0f0f0" transform="translate(272.2,580.6) rotate(-90)">1</text><rect x="266" y="589" width="2" height="1" fill="#c8c8c8"/><rect x="264" y="598" width="6" height="1" fill="#c8c8c8"/><rect x="266" y="607" width="2" height="1" fill="#c8c8c8"/><text x="0" y="0" font-size="12.5" text-anchor="middle" fill="#f0f0f0" transform="translate(272.2,616.4) rotate(-90)">0</text><rect x="266" y="625" width="2" height="1" fill="#c8c8c8"/><rect x="264" y="634" width="6" height="1" fill="#c8c8c8"/><rect x="266" y="643" width="2" height="1" fill="#c8c8c8"/><text x="0" y="0" font-size="12.5" text-anchor="middle" fill="#f0f0f0" transform="translate(272.2,652.2) rotate(-90)">1</text><rect x="266" y="661" width="2" height="1" fill="#c8c8c8"/><rect x="264" y="670" width="6" height="1" fill="#c8c8c8"/><rect x="266" y="679" width="2" height="1" fill="#c8c8c8"/><text x="0" y="0" font-size="12.5" text-anchor="middle" fill="#f0f0f0" transform="translate(272.2,688.0) rotate(-90)">2</text><rect x="266" y="696" width="2" height="1" fill="#c8c8c8"/><rect x="264" y="705" width="6" height="1" fill="#c8c8c8"/><rect x="266" y="714" width="2" height="1" fill="#c8c8c8"/><text x="0" y="0" font-size="12.5" text-anchor="middle" fill="#f0f0f0" transform="translate(272.2,723.8) rotate(-90)">3</text><rect x="266" y="732" width="2" height="1" fill="#c8c8c8"/><rect x="264" y="741" width="6" height="1" fill="#c8c8c8"/><rect x="266" y="750" width="2" height="1" fill="#c8c8c8"/><text x="0" y="0" font-size="12.5" text-anchor="middle" fill="#f0f0f0" transform="translate(272.2,759.6) rotate(-90)">4</text><rect x="266" y="768" width="2" height="1" fill="#c8c8c8"/><rect x="264" y="777" width="6" height="1" fill="#c8c8c8"/><rect x="266" y="786" width="2" height="1" fill="#c8c8c8"/><text x="0" y="0" font-size="12.5" text-anchor="middle" fill="#f0f0f0" transform="translate(272.2,795.5) rotate(-90)">5</text><rect x="266" y="804" width="2" height="1" fill="#c8c8c8"/><rect x="264" y="813" width="6" height="1" fill="#c8c8c8"/><rect x="266" y="822" width="2" height="1" fill="#c8c8c8"/><text x="0" y="0" font-size="12.5" text-anchor="middle" fill="#f0f0f0" transform="translate(272.2,831.3) rotate(-90)">6</text><rect x="266" y="840" width="2" height="1" fill="#c8c8c8"/><rect x="264" y="849" width="6" height="1" fill="#c8c8c8"/><rect x="266" y="858" width="2" height="1" fill="#c8c8c8"/><text x="0" y="0" font-size="12.5" text-anchor="middle" fill="#f0f0f0" transform="translate(272.2,867.1) rotate(-90)">7</text><rect x="266" y="876" width="2" height="1" fill="#c8c8c8"/><rect x="264" y="884" width="6" height="1" fill="#c8c8c8"/><rect x="266" y="893" width="2" height="1" fill="#c8c8c8"/><text x="0" y="0" font-size="12.5" text-anchor="middle" fill="#f0f0f0" transform="translate(272.2,902.9) rotate(-90)">8</text><rect x="266" y="911" width="2" height="1" fill="#c8c8c8"/><rect x="264" y="920" width="6" height="1" fill="#c8c8c8"/><rect x="266" y="929" width="2" height="1" fill="#c8c8c8"/><text x="0" y="0" font-size="12.5" text-anchor="middle" fill="#f0f0f0" transform="translate(272.2,938.7) rotate(-90)">9</text><rect x="266" y="947" width="2" height="1" fill="#c8c8c8"/><rect x="264" y="956" width="6" height="1" fill="#c8c8c8"/></svg>
<div class="a" style="left:299px;top:275px;width:1213px;height:683px;background:#fff;box-shadow:0 0 0 1px rgba(150,150,150,.6)"></div>
<svg style="left:0px;top:0px;" width="1904" height="962" viewBox="0 0 1904 962"><polygon points="1152,926 1481,607 1481,926" fill="#129dd6"/></svg>
<div class="a" style="left:362px;top:336px;width:1087px;height:560px;border:2px solid #363636"></div>
<div class="t" style="left:436.0px;top:410.0px;font-size:137px;line-height:137px;color:#000;transform:scaleX(0.9693);transform-origin:0 0;-webkit-text-stroke:0.9px #000;">No inspiration</div>
<div class="t" style="left:436.0px;top:567.0px;font-size:137px;line-height:137px;color:#000;transform:scaleX(0.9324);transform-origin:0 0;-webkit-text-stroke:0.9px #000;">for a design</div>
<div class="t" style="left:435.4px;top:737.0px;font-size:28px;line-height:28px;color:#000;transform:scaleX(1.0240);transform-origin:0 0;-webkit-text-stroke:0.15px #000;">Today I didn’t have any inspiration for a design… if</div>
<div class="t" style="left:435.4px;top:768.6px;font-size:28px;line-height:28px;color:#000;transform:scaleX(1.0594);transform-origin:0 0;-webkit-text-stroke:0.15px #000;">only something could help me there!</div>
<svg style="left:0px;top:0px;" width="1904" height="962" viewBox="0 0 1904 962"><rect x="1152.5" y="607.5" width="328" height="318" fill="none" stroke="#6e6e6e" stroke-width="1"/><line x1="1316.5" y1="576" x2="1316.5" y2="601" stroke="#6e6e6e" stroke-width="1"/><circle cx="1152.2" cy="607" r="5.8" fill="#fff" stroke="#646464" stroke-width="2.2"/><circle cx="1152.2" cy="766.5" r="5.8" fill="#fff" stroke="#646464" stroke-width="2.2"/><circle cx="1152.2" cy="926" r="5.8" fill="#fff" stroke="#646464" stroke-width="2.2"/><circle cx="1317.2" cy="607" r="5.8" fill="#fff" stroke="#646464" stroke-width="2.2"/><circle cx="1317.2" cy="926" r="5.8" fill="#fff" stroke="#646464" stroke-width="2.2"/><circle cx="1481.2" cy="607" r="5.8" fill="#fff" stroke="#646464" stroke-width="2.2"/><circle cx="1481.2" cy="766.5" r="5.8" fill="#fff" stroke="#646464" stroke-width="2.2"/><circle cx="1481.2" cy="926" r="5.8" fill="#fff" stroke="#646464" stroke-width="2.2"/><path d="M1326.47,563.25 A10.7,10.7 0 1 0 1322.39,572.43" fill="none" stroke="#5c5c5c" stroke-width="6.2"/><path d="M1326.47,563.25 A10.7,10.7 0 1 0 1322.39,572.43" fill="none" stroke="#fff" stroke-width="2.2"/><polygon points="1316,562.5 1335.5,562.5 1325.7,571.8" fill="#fff" stroke="#5c5c5c" stroke-width="2" stroke-linejoin="miter"/></svg>
<div class="a" style="left:1548px;top:117px;width:355px;height:845px;background:#1f1f1f"></div>
<div class="a" style="left:1547px;top:119px;width:1px;height:843px;background:#5a5a5a"></div>
<div class="a" style="left:1548px;top:117px;width:355px;height:3px;background:linear-gradient(#141414,#1f1f1f)"></div>
<div class="t" style="left:1561.7px;top:135.4px;font-size:18px;line-height:18px;color:#f2f2f2;font-weight:700;transform:scaleX(0.9569);transform-origin:0 0;">Format Shape</div>
<svg style="left:0px;top:0px;" width="1" height="1" viewBox="0 0 1 1"><polyline points="1826,140.5 1834.2,148.7 1842.4,140.5" fill="none" stroke="#e8e8e8" stroke-width="1.4"/><path d="M1868.5,138.5 L1881,151 M1881,138.5 L1868.5,151" stroke="#e8e8e8" stroke-width="1.4"/></svg>
<div class="t ui" style="left:1568.0px;top:181.9px;font-size:15.5px;line-height:15.5px;color:#f0f0f0;transform:scaleX(0.9784);transform-origin:0 0;">Shape Options</div>
<div class="t ui" style="left:1700.5px;top:181.9px;font-size:15.5px;line-height:15.5px;color:#f0f0f0;transform:scaleX(0.9527);transform-origin:0 0;">Text Options</div>
<div class="a" style="left:1568px;top:208px;width:102px;height:3px;background:#e07a45"></div>
<svg style="left:0px;top:0px;" width="1" height="1" viewBox="0 0 1 1"><path d="M1571.5,247.5 L1581,238 L1590.5,247.5 L1581,257 Z" fill="none" stroke="#e6e6e6" stroke-width="1.3" stroke-linejoin="round"/><path d="M1579.5,243 V235.5 Q1580.5,233 1582,235.5 V242" fill="none" stroke="#e6e6e6" stroke-width="1.2"/><circle cx="1582" cy="242.5" r="1.3" fill="#e6e6e6"/><path d="M1590,246 Q1598,246 1597,252 Q1596,256 1592.5,256.5 Q1594.5,251 1590,249 Z" fill="#e6e6e6"/><polygon points="1633.5,232.5 1645,241 1641,254 1626,254 1622,241" fill="none" stroke="#e6e6e6" stroke-width="1.3" stroke-linejoin="round"/><path d="M1626,254.5 H1641 M1626,254 L1624.5,259 M1641,254 L1642.5,259" fill="none" stroke="#e6e6e6" stroke-width="1.6"/><rect x="1664.5" y="226.5" width="39" height="39" rx="5" fill="#2c2c2c" stroke="#787878" stroke-width="1.2"/><path d="M1679.5,235 H1696.5 M1679.5,233 V237 M1696.5,233 V237" stroke="#e6e6e6" stroke-width="1.1"/><path d="M1670.5,241 H1675.5 M1673,241 V258 M1670.5,258 H1675.5" stroke="#e6e6e6" stroke-width="1.1"/><rect x="1678.5" y="240.5" width="18" height="18" rx="2" fill="#c23b1e" stroke="#e8e8e8" stroke-width="1"/><path d="M1687.5,243 V256 M1681,249.5 H1694" stroke="#fff" stroke-width="1"/><path d="M1685.8,244.8 L1687.5,242.8 L1689.2,244.8 M1685.8,254.2 L1687.5,256.2 L1689.2,254.2 M1682.8,247.8 L1680.8,249.5 L1682.8,251.2 M1692.2,247.8 L1694.2,249.5 L1692.2,251.2" fill="none" stroke="#fff" stroke-width="1"/><polyline points="1562,283.5 1674,283.5 1682,274 1690,283.5 1888,283.5" fill="#1f1f1f" stroke="#5e5e5e" stroke-width="1"/><polyline points="1572,300 1577.2,305.2 1582.4,300" fill="none" stroke="#e8e8e8" stroke-width="1.4"/><polyline points="1575.5,641 1581,646.3 1575.5,651.6" fill="none" stroke="#e8e8e8" stroke-width="1.4"/><polyline points="1575.5,674 1581,679.3 1575.5,684.6" fill="none" stroke="#e8e8e8" stroke-width="1.4"/></svg>
<div class="t" style="left:1590.0px;top:294.7px;font-size:15.5px;line-height:15.5px;color:#f2f2f2;font-weight:700;transform:scaleX(0.8990);transform-origin:0 0;">Size</div>
<div class="t ui" style="left:1588.8px;top:326.8px;font-size:15.5px;line-height:15.5px;color:#f0f0f0;transform:scaleX(1.0132);transform-origin:0 0;">H<u>e</u>ight</div>
<div class="t ui" style="left:1589.8px;top:361.5px;font-size:15.5px;line-height:15.5px;color:#f0f0f0;transform:scaleX(0.9874);transform-origin:0 0;">Wi<u>d</u>th</div>
<div class="t ui" style="left:1588.8px;top:396.4px;font-size:15.5px;line-height:15.5px;color:#f0f0f0;transform:scaleX(1.0107);transform-origin:0 0;">Ro<u>t</u>ation</div>
<div class="t ui" style="left:1589.6px;top:431.9px;font-size:15.5px;line-height:15.5px;color:#f0f0f0;transform:scaleX(0.9652);transform-origin:0 0;">Scale <u>H</u>eight</div>
<div class="t ui" style="left:1589.6px;top:467.2px;font-size:15.5px;line-height:15.5px;color:#f0f0f0;transform:scaleX(0.9659);transform-origin:0 0;">Scale <u>W</u>idth</div>
<div class="t ui" style="left:1610.8px;top:497.8px;font-size:15.5px;line-height:15.5px;color:#f0f0f0;transform:scaleX(0.9623);transform-origin:0 0;">Lock <u>a</u>spect ratio</div>
<div class="t ui" style="left:1610.8px;top:529.6px;font-size:15.5px;line-height:15.5px;color:#6e6e6e;transform:scaleX(0.9786);transform-origin:0 0;"><u>R</u>elative to original picture size</div>
<div class="t ui" style="left:1610.8px;top:561.8px;font-size:15.5px;line-height:15.5px;color:#6e6e6e;transform:scaleX(0.9464);transform-origin:0 0;"><u>B</u>est scale for slide show</div>
<div class="t ui" style="left:1600.8px;top:596.5px;font-size:15.5px;line-height:15.5px;color:#f0f0f0;transform:scaleX(0.9662);transform-origin:0 0;">Res<u>o</u>lution</div>
<div class="a" style="left:1762px;top:320px;width:101px;height:28px;background:#292929;border:1px solid #6a6a6a;border-radius:5px"></div>
<svg style="left:0px;top:0px;" width="1" height="1" viewBox="0 0 1 1"><polyline points="1848.5,329 1851.5,326.5 1854.5,329" fill="none" stroke="#e0e0e0" stroke-width="1.2"/><polyline points="1848.5,339.5 1851.5,342 1854.5,339.5" fill="none" stroke="#e0e0e0" stroke-width="1.2"/></svg>
<div class="t ui" style="left:1769.1px;top:326.3px;font-size:15.5px;line-height:15.5px;color:#f0f0f0;transform:scaleX(0.9568);transform-origin:0 0;">8,89 cm</div>
<div class="a" style="left:1762px;top:355px;width:101px;height:28px;background:#292929;border:1px solid #6a6a6a;border-radius:5px"></div>
<svg style="left:0px;top:0px;" width="1" height="1" viewBox="0 0 1 1"><polyline points="1848.5,364 1851.5,361.5 1854.5,364" fill="none" stroke="#e0e0e0" stroke-width="1.2"/><polyline points="1848.5,374.5 1851.5,377 1854.5,374.5" fill="none" stroke="#e0e0e0" stroke-width="1.2"/></svg>
<div class="t ui" style="left:1769.1px;top:361.3px;font-size:15.5px;line-height:15.5px;color:#f0f0f0;transform:scaleX(0.9568);transform-origin:0 0;">9,14 cm</div>
<div class="a" style="left:1762px;top:390px;width:101px;height:28px;background:#292929;border:1px solid #6a6a6a;border-radius:5px"></div>
<svg style="left:0px;top:0px;" width="1" height="1" viewBox="0 0 1 1"><polyline points="1848.5,399 1851.5,396.5 1854.5,399" fill="none" stroke="#e0e0e0" stroke-width="1.2"/><polyline points="1848.5,409.5 1851.5,412 1854.5,409.5" fill="none" stroke="#e0e0e0" stroke-width="1.2"/></svg>
<div class="t ui" style="left:1769.1px;top:396.3px;font-size:15.5px;line-height:15.5px;color:#f0f0f0;transform:scaleX(1.0029);transform-origin:0 0;">0°</div>
<div class="a" style="left:1762px;top:425px;width:101px;height:28px;background:#292929;border:1px solid #6a6a6a;border-radius:5px"></div>
<svg style="left:0px;top:0px;" width="1" height="1" viewBox="0 0 1 1"><polyline points="1848.5,434 1851.5,431.5 1854.5,434" fill="none" stroke="#e0e0e0" stroke-width="1.2"/><polyline points="1848.5,444.5 1851.5,447 1854.5,444.5" fill="none" stroke="#e0e0e0" stroke-width="1.2"/></svg>
<div class="t ui" style="left:1769.5px;top:431.4px;font-size:15.5px;line-height:15.5px;color:#f0f0f0;transform:scaleX(0.9242);transform-origin:0 0;">100%</div>
<div class="a" style="left:1762px;top:460px;width:101px;height:28px;background:#292929;border:1px solid #6a6a6a;border-radius:5px"></div>
<svg style="left:0px;top:0px;" width="1" height="1" viewBox="0 0 1 1"><polyline points="1848.5,469 1851.5,466.5 1854.5,469" fill="none" stroke="#e0e0e0" stroke-width="1.2"/><polyline points="1848.5,479.5 1851.5,482 1854.5,479.5" fill="none" stroke="#e0e0e0" stroke-width="1.2"/></svg>
<div class="t ui" style="left:1769.5px;top:466.4px;font-size:15.5px;line-height:15.5px;color:#f0f0f0;transform:scaleX(0.9242);transform-origin:0 0;">100%</div>
<div class="a" style="left:1590px;top:497px;width:16px;height:16px;background:#2c2c2c;border:1px solid #5c5c5c;border-radius:3px"></div>
<div class="a" style="left:1590px;top:529px;width:16px;height:16px;background:#151515;border:1px solid #3c3c3c;border-radius:3px"></div>
<div class="a" style="left:1590px;top:561px;width:16px;height:16px;background:#151515;border:1px solid #3c3c3c;border-radius:3px"></div>
<div class="a" style="left:1748px;top:591px;width:115px;height:26px;background:#141414;border:1px solid #3c3c3c;border-radius:5px"></div>
<svg style="left:0px;top:0px;" width="1" height="1" viewBox="0 0 1 1"><polyline points="1849,602 1852,605 1855,602" fill="none" stroke="#6a6a6a" stroke-width="1.2"/></svg>
<div class="t ui" style="left:1754.7px;top:596.5px;font-size:15.5px;line-height:15.5px;color:#6a6a6a;transform:scaleX(0.9323);transform-origin:0 0;">640 x 480</div>
<div class="t" style="left:1590.4px;top:638.8px;font-size:15.5px;line-height:15.5px;color:#f2f2f2;font-weight:700;transform:scaleX(0.9478);transform-origin:0 0;">Position</div>
<div class="t" style="left:1591.0px;top:671.9px;font-size:15.5px;line-height:15.5px;color:#f2f2f2;font-weight:700;transform:scaleX(0.9546);transform-origin:0 0;">Text Box</div>
<div class="t ui" style="left:16.5px;top:138.6px;font-size:17px;line-height:17px;color:#e0e0e0;transform:scaleX(0.8348);transform-origin:0 0;-webkit-text-stroke:0;">1</div>
<svg style="left:0px;top:0px;" width="1" height="1" viewBox="0 0 1 1"><polygon points="20,160 21.6,164.2 26,164.4 22.6,167.2 23.8,171.4 20,169 16.2,171.4 17.4,167.2 14,164.4 18.4,164.2" fill="#e8e8e8"/><rect x="13.5" y="163" width="1.2" height="1.2" fill="#e8e8e8"/><rect x="13.5" y="166.5" width="1.2" height="1.2" fill="#e8e8e8"/></svg>
<div class="a" style="left:42px;top:138px;width:184px;height:107px;border:3px solid #f09a86;border-radius:9px;background:#1a1a1a"></div>
<div class="a" style="left:45px;top:141px;width:178px;height:101px;background:#fff;border-radius:6px;border:1px solid #444"></div>
<div class="a" style="left:46px;top:142px;width:1215px;height:685px;transform:scale(0.14580);transform-origin:0 0;overflow:hidden"><svg style="left:0;top:0" width="1215" height="685" viewBox="0 0 1215 685"><polygon points="854,652 1183,333 1183,652" fill="#129dd6"/></svg><div class="a" style="left:64px;top:62px;width:1087px;height:560px;border:6px solid #2e2e2e"></div><div class="t" style="left:138.0px;top:136.0px;font-size:137px;line-height:137px;color:#000;transform:scaleX(0.9693);transform-origin:0 0;-webkit-text-stroke:3px #000">No inspiration</div><div class="t" style="left:138.0px;top:293.0px;font-size:137px;line-height:137px;color:#000;transform:scaleX(0.9324);transform-origin:0 0;-webkit-text-stroke:3px #000">for a design</div><div class="t" style="left:138px;top:463.0px;font-size:28px;line-height:32px;color:#555">Today I didn’t have any inspiration for a design… if<br>only something could help me there!</div></div>
</body></html>
